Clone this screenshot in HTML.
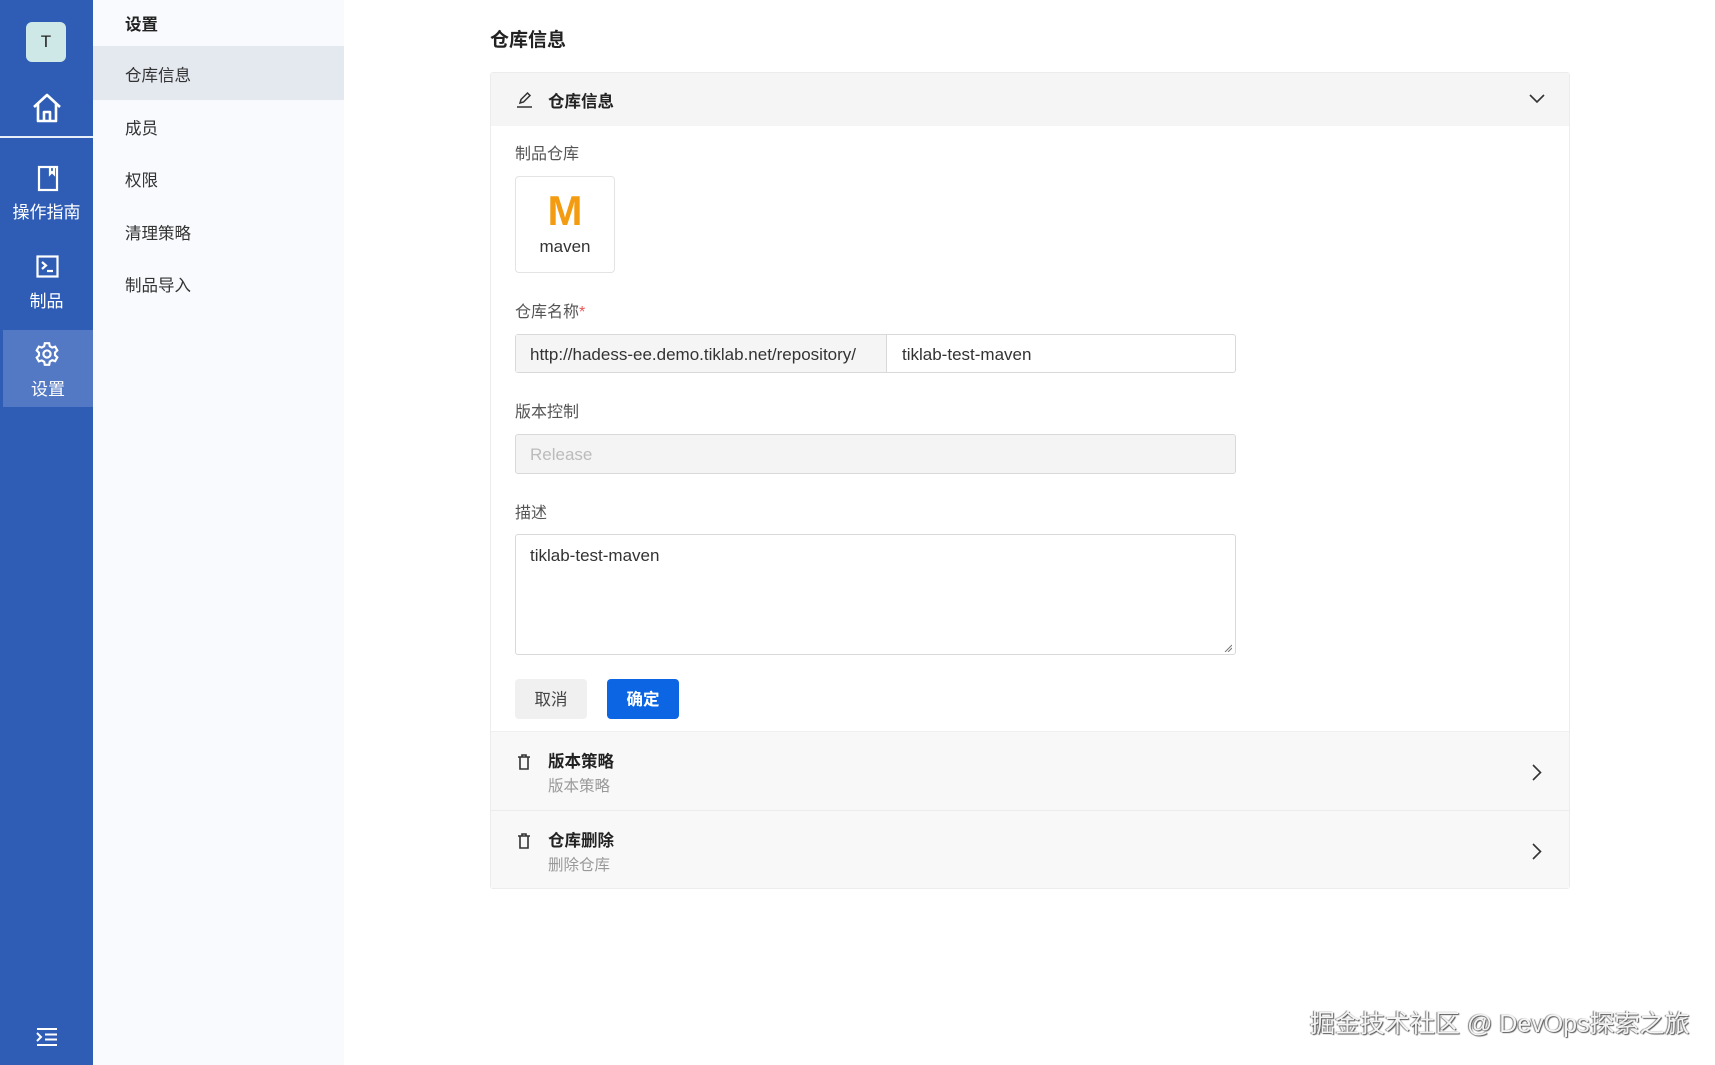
<!DOCTYPE html>
<html><head><meta charset="utf-8"><style>
*{margin:0;padding:0;box-sizing:border-box}
body{width:1715px;height:1065px;position:relative;background:#fff;font-family:"Liberation Sans","Noto Sans CJK SC",sans-serif;color:#222;overflow:hidden}
.a{position:absolute}
.rail{left:0;top:0;width:93px;height:1065px;background:#2f5db5}
.side{left:93px;top:0;width:251px;height:1065px;background:#f8fafd}
.ri{color:#fff;font-size:17px;text-align:center;width:93px;left:0}
.si{left:125px;font-size:16.5px;color:#333}
.lbl{left:515px;font-size:16px;color:#555}
.card{left:490px;top:72px;width:1080px;height:817px;border:1px solid #ececec;border-radius:3px}
</style></head><body>
<div class="a rail"></div>
<div class="a" style="left:26px;top:22px;width:40px;height:40px;border-radius:6px;background:#cde8e6;color:#222;font-size:17px;text-align:center;line-height:40px">T</div>
<svg class="a" style="left:31px;top:92px" width="32" height="32" viewBox="0 0 32 32" fill="none" stroke="#fff" stroke-width="2.6" stroke-linejoin="round"><path d="M3 15L16 3l13 12M7 12v17h18V12M13 29v-9h6v9"/></svg>
<div class="a" style="left:0;top:136px;width:93px;height:2px;background:#e8eef8"></div>
<svg class="a" style="left:37px;top:165px" width="22" height="27" viewBox="0 0 22 27" fill="none" stroke="#fff" stroke-width="2.2"><rect x="2" y="2" width="18" height="23"/><path d="M13 2v7l2-2 2 2V2"/></svg>
<div class="a ri" style="top:198px">操作指南</div>
<svg class="a" style="left:36px;top:255px" width="23" height="23" viewBox="0 0 23 23" fill="none" stroke="#fff" stroke-width="2.2"><rect x="1.5" y="1.5" width="20" height="20"/><path d="M6 7l4 3.5-4 3.5M11 16h6"/></svg>
<div class="a ri" style="top:287px">制品</div>
<div class="a" style="left:3px;top:330px;width:90px;height:77px;background:#5479c4"></div>
<svg class="a" style="left:34px;top:341px" width="26" height="26" viewBox="0 0 24 24" fill="none" stroke="#fff" stroke-width="2"><circle cx="12" cy="12" r="3.3"/><path d="M10 2h4l.6 2.8 2.2 1.3 2.7-.9 2 3.5-2.1 1.9v2.6l2.1 1.9-2 3.5-2.7-.9-2.2 1.3L14 22h-4l-.6-2.8-2.2-1.3-2.7.9-2-3.5 2.1-1.9v-2.6L2.5 8.7l2-3.5 2.7.9 2.2-1.3z"/></svg>
<div class="a ri" style="left:3px;width:90px;top:375px">设置</div>
<svg class="a" style="left:35px;top:1027px" width="24" height="20" viewBox="0 0 24 20" fill="none" stroke="#fff" stroke-width="2"><path d="M2 2h20M10 7.5h12M10 12.5h12M2 18h20M2 6l4 4-4 4"/></svg>

<div class="a side"></div>
<div class="a si" style="top:11px;font-weight:bold;color:#222">设置</div>
<div class="a" style="left:93px;top:46px;width:251px;height:54px;background:#e4e8ef"></div>
<div class="a si" style="top:62px">仓库信息</div>
<div class="a si" style="top:115px">成员</div>
<div class="a si" style="top:167px">权限</div>
<div class="a si" style="top:220px">清理策略</div>
<div class="a si" style="top:272px">制品导入</div>

<div class="a" style="left:490px;top:25px;font-size:19px;font-weight:bold">仓库信息</div>
<div class="a card"></div>
<div class="a" style="left:491px;top:73px;width:1078px;height:53px;background:#f5f5f5"></div>
<svg class="a" style="left:516px;top:91px" width="17" height="17" viewBox="0 0 17 17" fill="none" stroke="#333" stroke-width="1.5"><path d="M4 12l1-3.5L11.5 2l2.5 2.5-6.5 6.5zM1 16h15"/></svg>
<div class="a" style="left:548px;top:88px;font-size:16.5px;font-weight:bold">仓库信息</div>
<svg class="a" style="left:1529px;top:93px" width="16" height="12" viewBox="0 0 16 12" fill="none" stroke="#333" stroke-width="1.6"><path d="M1 2l7 7 7-7"/></svg>

<div class="a lbl" style="top:140px">制品仓库</div>
<div class="a" style="left:515px;top:176px;width:100px;height:97px;border:1px solid #e3e3e3;border-radius:4px;text-align:center">
<div style="font-size:42px;font-weight:bold;color:#f39c12;line-height:44px;margin-top:12px">M</div>
<div style="font-size:17px;color:#333;margin-top:4px">maven</div></div>

<div class="a lbl" style="top:298px">仓库名称<span style="color:#e55">*</span></div>
<div class="a" style="left:515px;top:334px;width:721px;height:39px;border:1px solid #d9d9d9;border-radius:3px;background:#fff"></div>
<div class="a" style="left:516px;top:335px;width:371px;height:37px;background:#f5f5f5;border-right:1px solid #d9d9d9;font-size:17px;line-height:39px;padding-left:14px;color:#333">http://hadess-ee.demo.tiklab.net/repository/</div>
<div class="a" style="left:902px;top:336px;font-size:17px;line-height:37px;color:#333">tiklab-test-maven</div>

<div class="a lbl" style="top:398px">版本控制</div>
<div class="a" style="left:515px;top:434px;width:721px;height:40px;border:1px solid #d9d9d9;border-radius:3px;background:#f4f4f4;font-size:17px;line-height:40px;padding-left:14px;color:#bbb">Release</div>

<div class="a lbl" style="top:499px">描述</div>
<div class="a" style="left:515px;top:534px;width:721px;height:121px;border:1px solid #d9d9d9;border-radius:3px;font-size:17px;padding:11px 14px;color:#333">tiklab-test-maven</div>
<svg class="a" style="left:1224px;top:644px" width="8" height="8" viewBox="0 0 8 8" stroke="#777" stroke-width="1"><path d="M1 8L8 1M4 8L8 4"/></svg>

<div class="a" style="left:515px;top:679px;width:72px;height:40px;background:#f0f0f0;border-radius:4px;text-align:center;line-height:42px;font-size:16.5px;color:#444">取消</div>
<div class="a" style="left:607px;top:679px;width:72px;height:40px;background:#0c66e4;border-radius:4px;text-align:center;line-height:42px;font-size:16.5px;color:#fff;font-weight:bold">确定</div>

<div class="a" style="left:491px;top:732px;width:1078px;height:156px;background:#f8f8f8"></div>
<div class="a" style="left:491px;top:810px;width:1078px;height:1px;background:#ececec"></div>
<div class="a" style="left:491px;top:731px;width:1078px;height:1px;background:#efefef"></div>
<svg class="a" style="left:517px;top:754px" width="14" height="16" viewBox="0 0 14 16" fill="none" stroke="#333" stroke-width="1.6"><path d="M1 3h12M5 3V1h4v2M3 3v12h8V3"/></svg>
<div class="a" style="left:548px;top:748px;font-size:16.5px;font-weight:bold">版本策略</div>
<div class="a" style="left:548px;top:774px;font-size:15.5px;color:#999">版本策略</div>
<svg class="a" style="left:1532px;top:764px" width="10" height="17" viewBox="0 0 10 17" fill="none" stroke="#333" stroke-width="1.6"><path d="M1 1l7.5 7.5L1 16"/></svg>
<svg class="a" style="left:517px;top:833px" width="14" height="16" viewBox="0 0 14 16" fill="none" stroke="#333" stroke-width="1.6"><path d="M1 3h12M5 3V1h4v2M3 3v12h8V3"/></svg>
<div class="a" style="left:548px;top:827px;font-size:16.5px;font-weight:bold">仓库删除</div>
<div class="a" style="left:548px;top:853px;font-size:15.5px;color:#999">删除仓库</div>
<svg class="a" style="left:1532px;top:843px" width="10" height="17" viewBox="0 0 10 17" fill="none" stroke="#333" stroke-width="1.6"><path d="M1 1l7.5 7.5L1 16"/></svg>

<div class="a" style="left:1310px;top:1004px;font-size:25px;color:#f4f4f4;text-shadow:1px 1px 1px #555,-1px 0 1px #777;white-space:nowrap">掘金技术社区 @ DevOps探索之旅</div>
</body></html>
